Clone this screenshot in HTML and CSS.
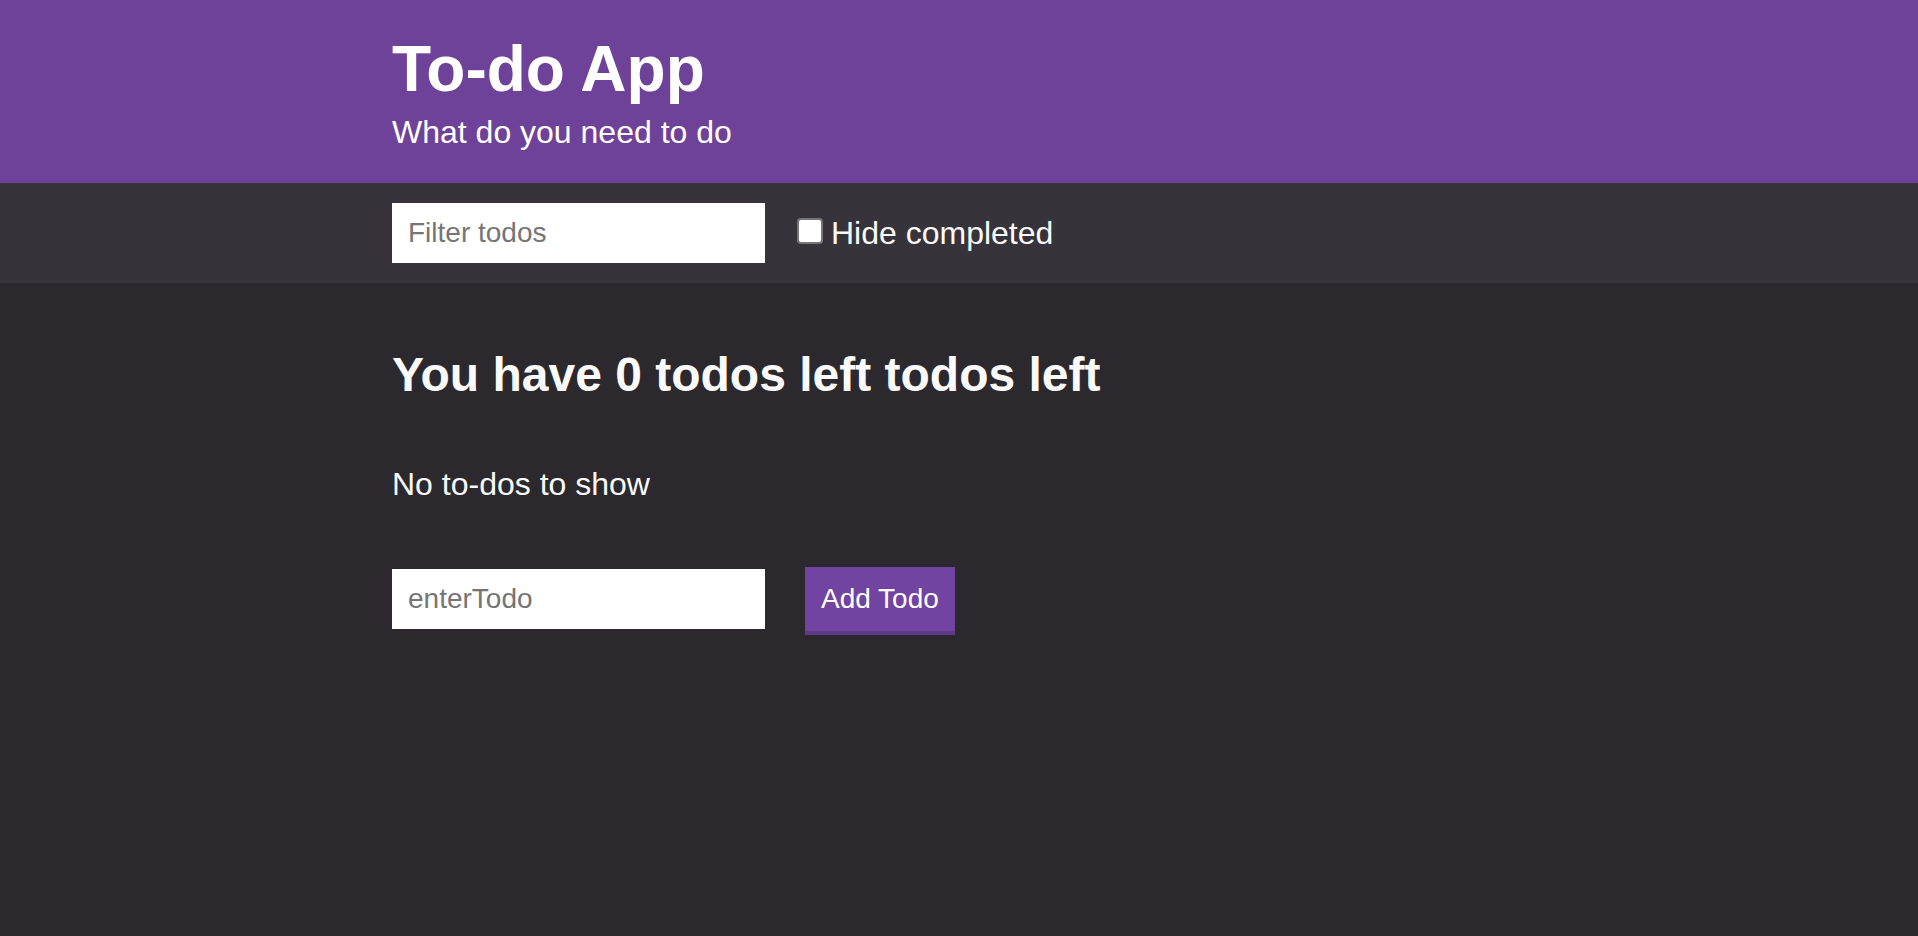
FILE: index.html
```html
<!DOCTYPE html>
<html lang="en">
<head>
  <meta charset="utf-8">
  <title>To-do App</title>
  <link rel="stylesheet" href="styles.css">
</head>
<body>
  <header class="header">
    <div class="container">
      <h1 class="header__title">To-do App</h1>
      <p class="header__subtitle">What do you need to do</p>
    </div>
  </header>
  <div class="actions">
    <div class="container actions__row">
      <input class="input" type="text" placeholder="Filter todos" aria-label="Filter todos">
      <label class="checkbox"><input class="checkbox__input" type="checkbox"><span>Hide completed</span></label>
    </div>
  </div>
  <main class="container">
    <h2 class="list-title">You have 0 todos left todos left</h2>
    <p class="empty-message">No to-dos to show</p>
    <form class="form">
      <input class="input" type="text" placeholder="enterTodo" aria-label="Enter todo">
      <button class="button" type="button">Add Todo</button>
    </form>
  </main>
</body>
</html>
```
FILE: styles.css
```css
* {
  box-sizing: border-box;
  margin: 0;
  padding: 0;
}

body {
  background: #2b292e;
  color: #fafafa;
  font-family: "Liberation Sans", Arial, sans-serif;
  font-size: 32px;
  line-height: 51px;
}

.container {
  max-width: 1198px;
  margin: 0 auto;
  padding: 0 32px;
}

.header {
  background: #6f4299;
  color: #fff;
  padding: 32px 0 25px;
}

.header__title {
  font-size: 64px;
  line-height: 75px;
}

.actions {
  background: #36343a;
  padding: 20px 0;
}

.actions__row {
  display: flex;
  align-items: center;
  gap: 32px;
}

.input {
  width: 373px;
  height: 60px;
  padding: 0 16px;
  border: none;
  background: #fff;
  font: 28px "Liberation Sans", Arial, sans-serif;
}

.input::placeholder {
  color: #757575;
}

.checkbox {
  display: flex;
  align-items: baseline;
  gap: 8px;
}

.checkbox__input {
  appearance: none;
  width: 26px;
  height: 26px;
  border: 2px solid #767676;
  border-radius: 4px;
  background: #fff;
}

.checkbox__input:checked {
  background: #6f4299;
}

.list-title {
  padding: 64px 0 57px;
  font-size: 48px;
  line-height: 55px;
}

.empty-message {
  padding-bottom: 57px;
}

.form {
  display: flex;
  align-items: baseline;
  gap: 40px;
}

.button {
  padding: 16px;
  border: none;
  border-bottom: 4px solid #5f3a87;
  background: #7044a0;
  color: #fff;
  font: 28px/32px "Liberation Sans", Arial, sans-serif;
}
```
